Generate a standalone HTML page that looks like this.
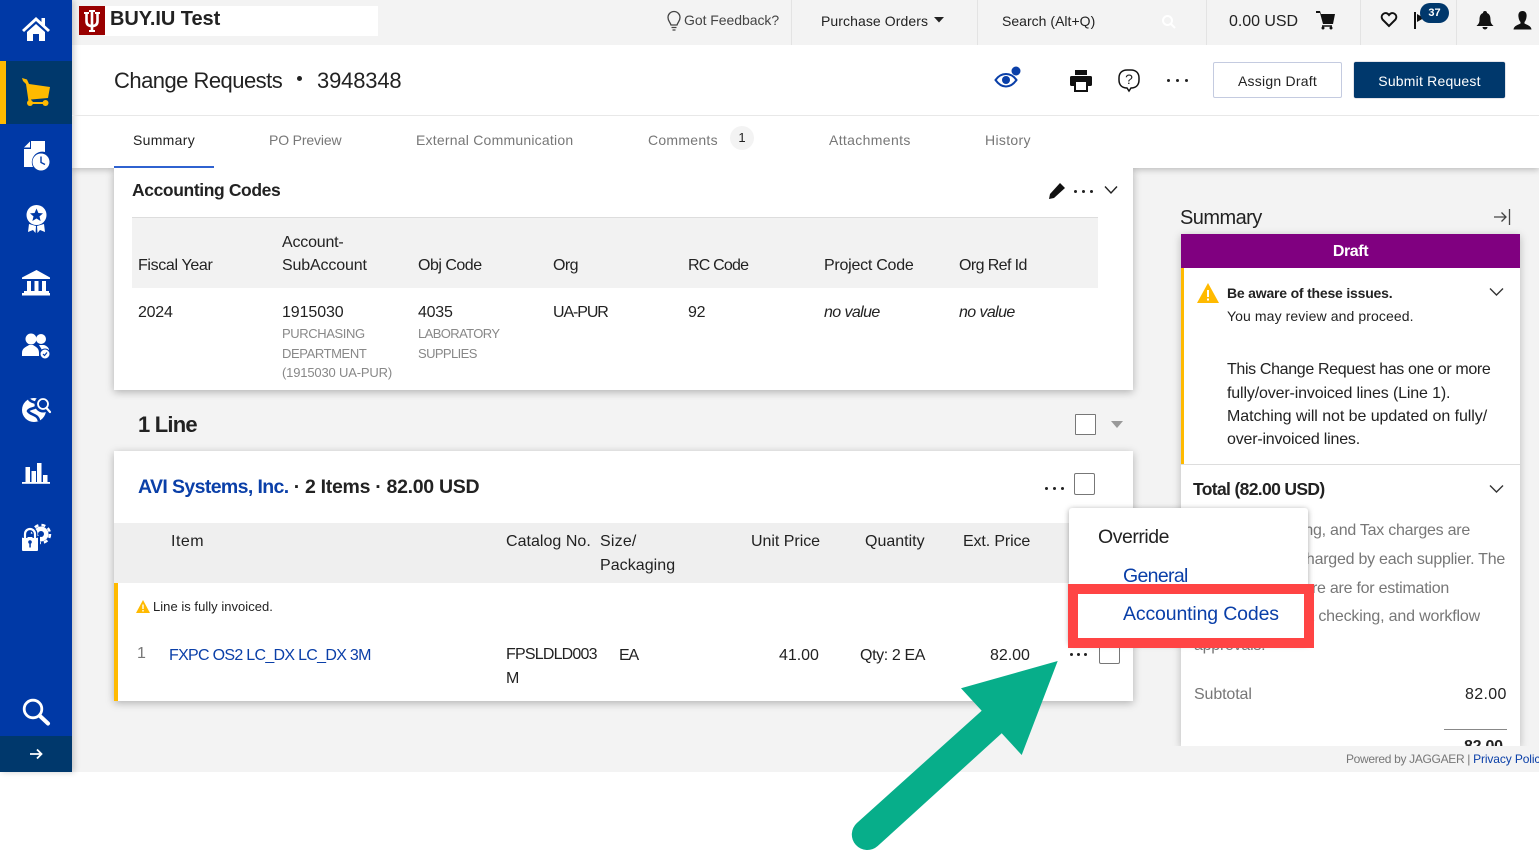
<!DOCTYPE html>
<html lang="en"><head><meta charset="utf-8"><title>Change Requests</title>
<style>
*{box-sizing:border-box}
html,body{margin:0;padding:0;width:1539px;height:853px;overflow:hidden;background:#fff;font-family:"Liberation Sans",Arial,sans-serif;color:#222}
.b{position:absolute}
.t{position:absolute;white-space:nowrap;line-height:20px;font-size:16px;letter-spacing:-.25px}
.g{color:#777}
.bl{color:#0a3fa8}
.s{font-size:14px;letter-spacing:-.1px}
.x{font-size:13px;color:#888;letter-spacing:-.4px}
.bd{font-weight:bold}
svg{position:absolute;overflow:visible}
.cb{position:absolute;background:#fff;border:1px solid #777;border-radius:2px}
.card{position:absolute;background:#fff;box-shadow:0 2px 8px rgba(0,0,0,.28)}
.dots{position:absolute;width:3px;height:3px;border-radius:50%;background:#222;box-shadow:8px 0 0 #222,16px 0 0 #222}
</style></head><body>
<div class="b" style="left:0;top:0;width:1539px;height:772px;background:#f3f3f3"></div>

<!-- page header -->
<div class="b" style="left:72px;top:45px;width:1467px;height:123px;background:#fff;box-shadow:0 2px 6px rgba(0,0,0,.22);clip-path:inset(0 0 -10px 0)"></div>

<!-- sidebar -->
<div class="b" style="left:0;top:0;width:72px;height:772px;background:#0039a6;box-shadow:2px 0 6px rgba(0,0,0,.2)"></div>
<div class="b" style="left:0;top:61px;width:72px;height:63px;background:#00386c"></div>
<div class="b" style="left:0;top:61px;width:6px;height:63px;background:#ffba00"></div>
<div class="b" style="left:0;top:736px;width:72px;height:36px;background:#00386c"></div>
<svg style="left:0;top:0" width="72" height="772" fill="#fff">
 <path d="M22 30 36 17 41.500 22V18H45V25.500L50 30 48 32 36 21 24 32Z"/><path d="M27 32 36 24 45 32V41H39V34H33V41H27Z"/>
 <g fill="#ffba00"><path d="M22 78 27 79.500 29 84 50 87 48 98 31 99.500 31.500 101 28.500 101 26 84 23 81Z"/><circle cx="30" cy="103" r="3"/><circle cx="45.500" cy="103" r="3"/><rect x="30" y="102" width="15" height="2"/></g>
 <path d="M31 141H45V152A10.500 10.500 0 0 0 33 167H24V149H31Z"/><path d="M24 147.500 30 141.500V147.500Z"/><circle cx="41" cy="162" r="8.500"/><path d="M41 156.500V162.500L45 164.500" fill="none" stroke="#0039a6" stroke-width="1.400"/>
 <circle cx="36.500" cy="215" r="10"/><path d="M36.500 208.500 38.400 213 43 213.400 39.500 216.400 40.600 221 36.500 218.500 32.400 221 33.500 216.400 30 213.400 34.600 213Z" fill="#0039a6"/><path d="M29 224 28 232 33 230 35.500 233 36 226ZM44 224 45 232 40 230 37.500 233 37 226Z"/>
 <path d="M36.500 270 50 277.500V279H22V277.500Z"/><rect x="27" y="281" width="4" height="10"/><rect x="34.500" y="281" width="4" height="10"/><rect x="42" y="281" width="4" height="10"/><rect x="24" y="291" width="25" height="2"/><rect x="22" y="293" width="28" height="2.500"/>
 <circle cx="31" cy="339" r="5.500"/><circle cx="41" cy="339" r="5"/><path d="M22 353C22 348 26 347 29 345H33C36 347 39 348 39 353V356H22Z"/><path d="M39 345H44C47 346 49 348 49 350H42Z"/><circle cx="45" cy="354" r="5" stroke="#0039a6"/><path d="M43 354 44.500 355.500 47 352.500" stroke="#0039a6" fill="none" stroke-width="1.200"/>
 <circle cx="34" cy="410" r="12"/><circle cx="43" cy="404" r="8.500" fill="#0039a6"/><path d="M29 399C31 403 36 401 37 405 37 409 29 408 28 411 30 415 38 414 39 421" fill="none" stroke="#0039a6" stroke-width="2.600"/><circle cx="43" cy="404" r="5" fill="none" stroke="#fff" stroke-width="1.800"/><path d="M46.500 408 50 412" stroke="#fff" stroke-width="2.200" stroke-linecap="round"/>
 <rect x="22" y="482" width="28" height="1.800"/><rect x="25.500" y="467" width="4.500" height="15"/><rect x="31.500" y="471" width="4.500" height="11"/><rect x="37" y="463" width="4.500" height="19"/><rect x="43" y="475" width="4.500" height="7"/>
 <circle cx="41" cy="534" r="7.500"/><circle cx="41" cy="534" r="9" fill="none" stroke="#fff" stroke-width="2.500" stroke-dasharray="4 3.100"/><circle cx="41" cy="534" r="3" fill="#0039a6"/><path d="M20 536H40V552H20Z" fill="#0039a6"/><rect x="22" y="537" width="16" height="14" rx="1"/><path d="M25 538V534A5 5 0 0 1 35 534V538" fill="none" stroke="#0039a6" stroke-width="5"/><path d="M25 538V534A5 5 0 0 1 35 534V538" fill="none" stroke="#fff" stroke-width="2.200"/><circle cx="30" cy="542" r="1.800" fill="#0039a6"/><rect x="29.300" y="543" width="1.500" height="4.500" fill="#0039a6"/>
 <circle cx="33" cy="709" r="8.800" fill="none" stroke="#fff" stroke-width="2.800"/><path d="M40 716 48 723.500" stroke="#fff" stroke-width="4" stroke-linecap="round"/>
 <path d="M30 754H41M37 749.500 41.500 754 37 758.500" fill="none" stroke="#fff" stroke-width="1.800"/>
</svg>

<!-- top bar -->
<div class="b" style="left:104px;top:6px;width:274px;height:30px;background:#fff"></div>
<div class="b" style="left:79px;top:6px;width:26px;height:29px;background:#990000"></div>
<svg style="left:79px;top:6px" width="26" height="29" fill="none" stroke="#fff" stroke-width="2.600"><path d="M13 5V25M7.500 8V15C7.500 19 10 20 13 20S18.500 19 18.500 15V8"/><path d="M5 7H10M16 7H21M10 5H16M10 25H16" stroke-width="2"/></svg>
<div class="t bd" style="left:110px;top:9px;font-size:20px;letter-spacing:-.05px">BUY.IU Test</div>
<div class="b" style="left:791px;top:0;width:1px;height:45px;background:#e3e3e3"></div>
<div class="b" style="left:977px;top:0;width:1px;height:45px;background:#e3e3e3"></div>
<div class="b" style="left:1206px;top:0;width:1px;height:45px;background:#e3e3e3"></div>
<div class="b" style="left:1360px;top:0;width:1px;height:45px;background:#e3e3e3"></div>
<div class="b" style="left:1456px;top:0;width:1px;height:45px;background:#e3e3e3"></div>
<svg style="left:666px;top:10px" width="16" height="22" fill="none" stroke="#444" stroke-width="1.300"><path d="M5 15C4 12 2 11 2 7.500A6 6 0 0 1 14 7.500C14 11 12 12 11 15ZM5.500 17.500H10.500M6.500 20H9.500"/></svg>
<div class="t s" style="left:684px;top:10px;color:#444;letter-spacing:-.05px">Got Feedback?</div>
<div class="t s" style="left:821px;top:11px;letter-spacing:.08px">Purchase Orders</div>
<svg style="left:934px;top:17px" width="10" height="6"><path d="M0 0H10L5 5.500Z" fill="#222"/></svg>
<div class="t s" style="left:1002px;top:11px;letter-spacing:.02px">Search (Alt+Q)</div>
<svg style="left:1161px;top:14px" width="15" height="15" fill="none" stroke="#fff" stroke-width="2"><circle cx="6.500" cy="6.500" r="4.500"/><path d="M10 10 14 14"/></svg>
<div class="t" style="left:1229px;top:12px;letter-spacing:-.05px">0.00 USD</div>
<svg style="left:1316px;top:11px" width="20" height="19"><path d="M0 0H4L5 3H19L17 13H7L4 2H0Z" fill="#111"/><path d="M6 15H16" stroke="#111" stroke-width="1.500"/><circle cx="7" cy="17" r="1.500" fill="#111"/><circle cx="15" cy="17" r="1.500" fill="#111"/></svg>
<svg style="left:1380px;top:11px" width="18" height="17"><path d="M9 15 2.500 8.500C-.5 4 5.500 -.5 9 4 12.500 -.5 18.500 4 15.500 8.500Z" fill="none" stroke="#111" stroke-width="2"/></svg>
<svg style="left:1413px;top:12px" width="14" height="18"><rect width="2" height="17" x="1" fill="#111"/><path d="M4 2 11 6 4 10Z" fill="#111"/></svg>
<div class="b" style="left:1420px;top:3px;width:29px;height:20px;border-radius:10px;background:#00386c"></div>
<div class="t bd" style="left:1420px;top:3px;width:29px;text-align:center;font-size:11px;color:#fff;letter-spacing:0">37</div>
<svg style="left:1476px;top:11px" width="18" height="19" fill="#111"><path d="M9 0C10.500 0 11 1 11 2 14 3 14.500 6 14.500 9 14.500 12 16 13.500 17.500 15H.5C2 13.500 3.500 12 3.500 9 3.500 6 4 3 7 2 7 1 7.500 0 9 0Z"/><path d="M6.500 16H11.500A2.500 2.500 0 0 1 6.500 16Z"/></svg>
<svg style="left:1513px;top:11px" width="19" height="19" fill="#111"><path d="M9.500 0C13 0 14 3 13.500 6 13.300 8 12.500 10 11.500 11V12.500C14 14 18 14.500 18.500 18.500H.5C1 14.500 5 14 7.500 12.500V11C6.500 10 5.700 8 5.500 6 5 3 6 0 9.500 0Z"/></svg>

<!-- page header content -->
<div class="b" style="left:72px;top:115px;width:1467px;height:1px;background:#e8e8e8"></div>
<div class="t" style="left:114px;top:70px;font-size:22px;line-height:22px;letter-spacing:-.53px">Change Requests</div>
<div class="b" style="left:297px;top:76px;width:5px;height:5px;border-radius:50%;background:#222"></div>
<div class="t" style="left:317px;top:70px;font-size:22px;line-height:22px;letter-spacing:-.17px">3948348</div>
<svg style="left:994px;top:66px" width="28" height="24" fill="none" stroke="#0a3fa8"><path d="M1.500 14C5 9 9 8 12 8S19 9 22.500 14C19 19 15 20.500 12 20.500S5 19 1.500 14Z" stroke-width="2"/><circle cx="12" cy="14" r="4" fill="#0a3fa8" stroke="none"/><circle cx="22" cy="5" r="4.500" fill="#0a3fa8" stroke="none"/></svg>
<svg style="left:1070px;top:70px" width="22" height="21" fill="#111"><rect x="5" y="0" width="12" height="5"/><rect x="0" y="6" width="22" height="10" rx="1.500"/><rect x="5" y="11" width="12" height="10" fill="#fff" stroke="#111" stroke-width="2"/></svg>
<svg style="left:1118px;top:69px" width="22" height="23" fill="none" stroke="#111" stroke-width="1.500"><path d="M9 1H13C18 1 21 4 21 9V11C21 16 18 19 13 19H13L11 22 9 19C4 19 1 16 1 11V9C1 4 4 1 9 1Z"/></svg>
<div class="t" style="left:1118px;top:69px;width:22px;text-align:center;font-size:14px;letter-spacing:0">?</div>
<div class="dots" style="left:1167px;top:79px;width:3px;height:3px;box-shadow:9px 0 0 #222,18px 0 0 #222"></div>
<div class="b" style="left:1213px;top:62px;width:129px;height:36px;background:#fff;border:1px solid #c4cbe0;border-radius:2px"></div>
<div class="t s" style="left:1213px;top:71px;width:129px;text-align:center;letter-spacing:.23px">Assign Draft</div>
<div class="b" style="left:1354px;top:62px;width:151px;height:36px;background:#00386c;border-radius:2px;box-shadow:0 0 1px #557"></div>
<div class="t s" style="left:1354px;top:71px;width:151px;text-align:center;color:#fff;letter-spacing:.2px">Submit Request</div>

<!-- tabs -->
<div class="t s" style="left:133px;top:130px;letter-spacing:.3px">Summary</div>
<div class="b" style="left:114px;top:166px;width:100px;height:2px;background:#2f62d0"></div>
<div class="t s g" style="left:269px;top:130px;letter-spacing:-.15px">PO Preview</div>
<div class="t s g" style="left:416px;top:130px;letter-spacing:.22px">External Communication</div>
<div class="t s g" style="left:648px;top:130px;letter-spacing:.27px">Comments</div>
<div class="b" style="left:730px;top:126px;width:24px;height:24px;border-radius:50%;background:#f3f3f3"></div>
<div class="t s" style="left:730px;top:128px;width:24px;text-align:center;font-size:13px">1</div>
<div class="t s g" style="left:829px;top:130px;letter-spacing:.35px">Attachments</div>
<div class="t s g" style="left:985px;top:130px;letter-spacing:.33px">History</div>

<!-- accounting codes -->
<div class="card" style="left:114px;top:168px;width:1019px;height:222px;clip-path:inset(0 -10px -10px -10px)"></div>
<div class="t bd" style="left:132px;top:180px;font-size:17.500px;letter-spacing:-.39px">Accounting Codes</div>
<svg style="left:1048px;top:182px" width="18" height="18" fill="#111"><path d="M12 1 17 6 6 16 1 17 2 12Z"/></svg>
<div class="dots" style="left:1074px;top:190px"></div>
<svg style="left:1104px;top:185px" width="14" height="10"><path d="M1 1.500 7 8 13 1.500" fill="none" stroke="#222" stroke-width="1.400"/></svg>
<div class="b" style="left:132px;top:217px;width:966px;height:71px;background:#f2f2f2;border-top:1px solid #ddd"></div>
<div class="t" style="left:138px;top:256px;letter-spacing:-.35px">Fiscal Year</div>
<div class="t" style="left:282px;top:233px;letter-spacing:-.2px">Account-</div>
<div class="t" style="left:282px;top:256px;letter-spacing:-.15px">SubAccount</div>
<div class="t" style="left:418px;top:256px;letter-spacing:-.5px">Obj Code</div>
<div class="t" style="left:553px;top:256px;letter-spacing:-.55px">Org</div>
<div class="t" style="left:688px;top:256px;letter-spacing:-.8px">RC Code</div>
<div class="t" style="left:824px;top:256px">Project Code</div>
<div class="t" style="left:959px;top:256px;letter-spacing:-.6px">Org Ref Id</div>
<div class="t" style="left:138px;top:303px">2024</div>
<div class="t" style="left:282px;top:303px;letter-spacing:-.1px">1915030</div>
<div class="t x" style="left:282px;top:324px">PURCHASING</div>
<div class="t x" style="left:282px;top:344px">DEPARTMENT</div>
<div class="t x" style="left:282px;top:363px;letter-spacing:-.17px">(1915030 UA-PUR)</div>
<div class="t" style="left:418px;top:303px">4035</div>
<div class="t x" style="left:418px;top:324px;letter-spacing:-.6px">LABORATORY</div>
<div class="t x" style="left:418px;top:344px;letter-spacing:-.6px">SUPPLIES</div>
<div class="t" style="left:553px;top:303px;letter-spacing:-1.1px">UA-PUR</div>
<div class="t" style="left:688px;top:303px">92</div>
<div class="t" style="left:824px;top:303px;font-style:italic;letter-spacing:-.6px">no value</div>
<div class="t" style="left:959px;top:303px;font-style:italic;letter-spacing:-.6px">no value</div>

<!-- 1 line -->
<div class="t bd" style="left:138px;top:415px;font-size:22px;letter-spacing:-.8px">1 Line</div>
<div class="cb" style="left:1075px;top:414px;width:21px;height:21px;border-radius:1px"></div>
<svg style="left:1111px;top:421px" width="12" height="7"><path d="M0 0H12L6 7Z" fill="#999"/></svg>

<div class="card" style="left:114px;top:451px;width:1019px;height:250px"></div>
<div class="t bd" style="left:138px;top:477px;font-size:19.500px;letter-spacing:-.3px"><span class="bl" style="letter-spacing:-.62px">AVI Systems, Inc.</span> · 2 Items · 82.00 USD</div>
<div class="dots" style="left:1045px;top:487px"></div>
<div class="cb" style="left:1074px;top:473px;width:21px;height:22px"></div>
<div class="b" style="left:114px;top:523px;width:1019px;height:60px;background:#efefef"></div>
<div class="t" style="left:171px;top:532px;letter-spacing:.5px">Item</div>
<div class="t" style="left:506px;top:532px;letter-spacing:.03px">Catalog No.</div>
<div class="t" style="left:600px;top:532px;letter-spacing:.2px">Size/</div>
<div class="t" style="left:600px;top:556px;letter-spacing:.05px">Packaging</div>
<div class="t" style="left:751px;top:532px;letter-spacing:-.03px">Unit Price</div>
<div class="t" style="left:865px;top:532px;letter-spacing:0">Quantity</div>
<div class="t" style="left:963px;top:532px;letter-spacing:-.13px">Ext. Price</div>
<div class="b" style="left:114px;top:583px;width:4px;height:118px;background:#ffba00"></div>
<svg style="left:136px;top:600px" width="14" height="13"><path d="M7 0 14 13H0Z" fill="#ffba00"/><rect x="6.300" y="4.500" width="1.400" height="4.500" fill="#fff"/><rect x="6.300" y="10" width="1.400" height="1.500" fill="#fff"/></svg>
<div class="t" style="left:153px;top:597px;font-size:13px;letter-spacing:.03px">Line is fully invoiced.</div>
<div class="t g" style="left:137px;top:644px">1</div>
<div class="t bl" style="left:169px;top:646px;letter-spacing:-.7px">FXPC OS2 LC_DX LC_DX 3M</div>
<div class="t" style="left:506px;top:645px;letter-spacing:-.8px">FPSLDLD003</div>
<div class="t" style="left:506px;top:669px">M</div>
<div class="t" style="left:619px;top:646px;letter-spacing:-1.2px">EA</div>
<div class="t" style="left:779px;top:646px;letter-spacing:-.05px">41.00</div>
<div class="t" style="left:860px;top:646px;letter-spacing:-.38px">Qty: 2 EA</div>
<div class="t" style="left:990px;top:646px;letter-spacing:-.05px">82.00</div>
<div class="b" style="left:1070px;top:653px;width:3px;height:3px;border-radius:50%;background:#222;box-shadow:7px 0 0 #222,14px 0 0 #222"></div>
<div class="cb" style="left:1099px;top:643px;width:21px;height:21px"></div>

<!-- summary panel -->
<div class="t" style="left:1180px;top:208px;font-size:20px;letter-spacing:-.55px">Summary</div>
<svg style="left:1493px;top:208px" width="18" height="18" fill="none" stroke="#444" stroke-width="1.300"><path d="M1 9H13M8.500 4.500 13 9 8.500 13.500M16.500 1V17"/></svg>
<div class="b" style="left:1181px;top:234px;width:339px;height:512px;background:#fff;box-shadow:0 2px 8px rgba(0,0,0,.25);clip-path:inset(-10px -10px 0 -10px)"></div>
<div class="b" style="left:1181px;top:234px;width:339px;height:34px;background:#800080"></div>
<div class="t bd" style="left:1181px;top:242px;width:339px;text-align:center;color:#fff;letter-spacing:-.4px">Draft</div>
<div class="b" style="left:1181px;top:268px;width:3px;height:196px;background:#ffba00"></div>
<svg style="left:1197px;top:283px" width="22" height="20"><path d="M11 0 22 20H0Z" fill="#ffba00"/><rect x="10" y="7" width="2" height="7" fill="#fff"/><rect x="10" y="15.500" width="2" height="2" fill="#fff"/></svg>
<div class="t bd" style="left:1227px;top:283px;font-size:14px;letter-spacing:-.2px">Be aware of these issues.</div>
<div class="t s" style="left:1227px;top:306px;letter-spacing:.1px">You may review and proceed.</div>
<svg style="left:1489px;top:287px" width="15" height="10"><path d="M1 1.500 7.500 8 14 1.500" fill="none" stroke="#333" stroke-width="1.400"/></svg>
<div class="t" style="left:1227px;top:360px;letter-spacing:-.35px">This Change Request has one or more</div>
<div class="t" style="left:1227px;top:384px;letter-spacing:-.15px">fully/over-invoiced lines (Line 1).</div>
<div class="t" style="left:1227px;top:407px;letter-spacing:-.06px">Matching will not be updated on fully/</div>
<div class="t" style="left:1227px;top:430px;letter-spacing:-.2px">over-invoiced lines.</div>
<div class="b" style="left:1181px;top:464px;width:339px;height:1px;background:#ddd"></div>
<div class="t bd" style="left:1193px;top:479px;font-size:17.500px;letter-spacing:-.65px">Total (82.00 USD)</div>
<svg style="left:1489px;top:484px" width="15" height="10"><path d="M1 1.500 7.500 8 14 1.500" fill="none" stroke="#333" stroke-width="1.400"/></svg>
<div class="t g" style="left:1194px;top:521px;width:276px;text-align:right;overflow:hidden;direction:rtl"><span style="direction:ltr;unicode-bidi:embed">Shipping, Handling, and Tax charges are</span></div>
<div class="t g" style="left:1194px;top:550px;width:311px;text-align:right;overflow:hidden;direction:rtl"><span style="direction:ltr;unicode-bidi:embed">calculated and charged by each supplier. The</span></div>
<div class="t g" style="left:1194px;top:579px;width:255px;text-align:right;overflow:hidden;direction:rtl"><span style="direction:ltr;unicode-bidi:embed">values shown here are for estimation</span></div>
<div class="t g" style="left:1194px;top:607px;width:286px;text-align:right;overflow:hidden;direction:rtl;letter-spacing:-.17px"><span style="direction:ltr;unicode-bidi:embed">purposes, budget checking, and workflow</span></div>
<div class="t g" style="left:1194px;top:636px">approvals.</div>
<div class="t g" style="left:1194px;top:685px;letter-spacing:-.12px">Subtotal</div>
<div class="t" style="left:1465px;top:685px;letter-spacing:.35px">82.00</div>
<div class="b" style="left:1444px;top:729px;width:63px;height:1px;background:#888"></div>
<div class="b" style="left:1181px;top:735px;width:339px;height:11px;overflow:hidden"><div class="t bd" style="left:283px;top:2px">82.00</div></div>

<!-- footer -->
<div class="t" style="left:1346px;top:749px;font-size:12px;letter-spacing:-.32px;color:#777">Powered by JAGGAER | <span class="bl" style="letter-spacing:-.12px">Privacy Policy</span></div>

<!-- popup -->
<div class="b" style="left:1069px;top:508px;width:239px;height:136px;background:#fff;border-radius:3px;box-shadow:0 1px 6px rgba(0,0,0,.35)"></div>
<div class="t" style="left:1098px;top:527px;font-size:19.500px;letter-spacing:-.47px">Override</div>
<div class="t bl" style="left:1123px;top:566px;font-size:19.500px;letter-spacing:-.67px">General</div>
<div class="t bl" style="left:1123px;top:604px;font-size:19.500px;letter-spacing:-.15px">Accounting Codes</div>
<div class="b" style="left:1068px;top:584px;width:246px;height:64px;border:10px solid #ff4444"></div>

<!-- arrow -->
<svg style="left:0;top:0" width="1539" height="853"><path d="M1057.700 661 961 688.300 981.700 710.700 856.900 823A15.500 15.500 0 0 0 877.700 846L1001.700 733.300 1021.700 755Z" fill="#07ae8a"/></svg>
</body></html>
